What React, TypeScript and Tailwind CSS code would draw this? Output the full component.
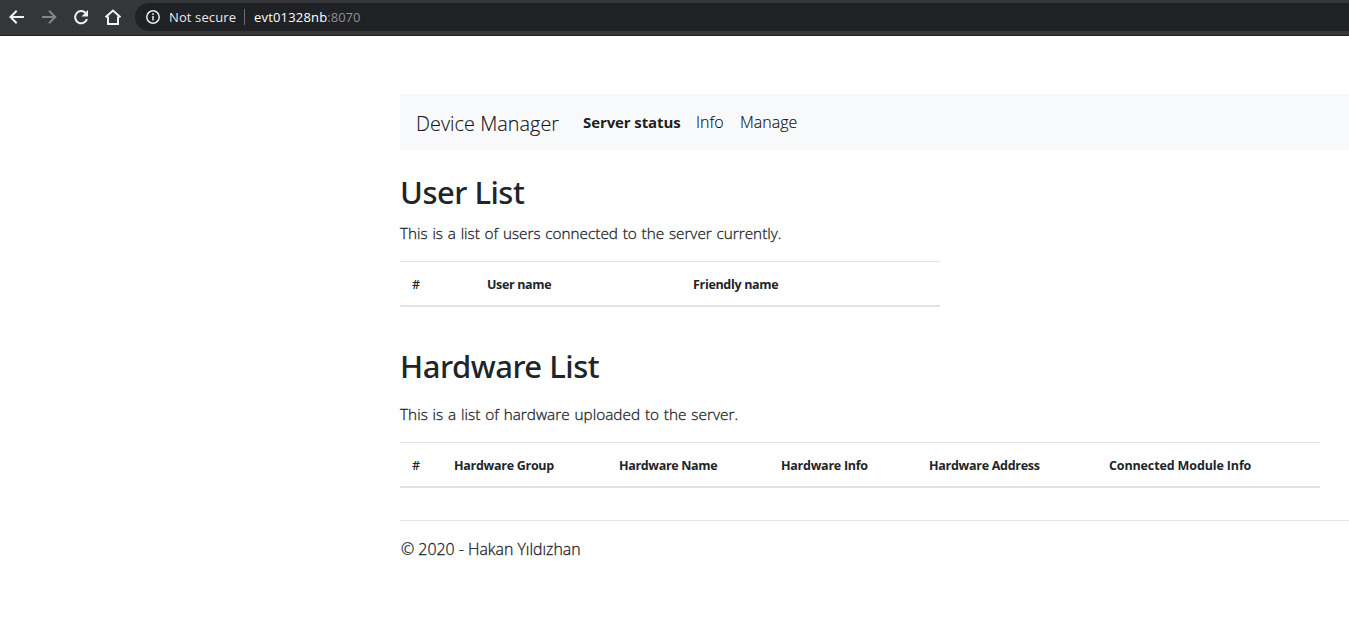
type Column = { label: string; className: string };

const userColumns: Column[] = [
  { label: '#', className: 'w-[75px] font-semibold' },
  { label: 'User name', className: 'w-[206px] font-bold tracking-[-0.36px]' },
  { label: 'Friendly name', className: 'w-[259px] font-bold tracking-[-0.32px]' },
];

const hardwareColumns: Column[] = [
  { label: '#', className: 'w-[42px] font-semibold' },
  { label: 'Hardware Group', className: 'w-[165px] font-bold tracking-[-0.28px]' },
  { label: 'Hardware Name', className: 'w-[162px] font-bold tracking-[-0.34px]' },
  { label: 'Hardware Info', className: 'w-[148px] font-bold tracking-[-0.26px]' },
  { label: 'Hardware Address', className: 'w-[180px] font-bold tracking-[-0.28px]' },
  { label: 'Connected Module Info', className: 'w-[223px] font-bold tracking-[-0.13px]' },
];

function HeaderTable({ columns }: { columns: Column[] }) {
  return (
    <table className="table-fixed border-separate border-spacing-0">
      <thead>
        <tr>
          {columns.map((c) => (
            <th
              key={c.label}
              className={`h-[46px] border-t border-b-2 border-[#dee2e6] pt-0.5 pr-0 pb-0 pl-3 text-left text-[12.5px] leading-5 ${c.className}`}
            >
              {c.label}
            </th>
          ))}
        </tr>
      </thead>
    </table>
  );
}

const heading = "font-['Noto_Sans',sans-serif] text-[31px] leading-[38px] font-medium tracking-[-0.5px]";
const paragraph = 'text-[15.3px] leading-6 font-light [word-spacing:0.8px] [-webkit-text-stroke:0.3px_#212529]';

function BrowserBar() {
  return (
    <header className="flex h-9 items-start border-b border-[#202124] bg-[#35363a] pt-[3px]">
      <div className="flex w-[135px] shrink-0 gap-2 pt-px pl-1">
        <svg width="24" height="26" viewBox="0 0 24 26" fill="none" stroke="#f1f3f4" strokeWidth="2">
          <path d="M20 13H7M12.700 6.800L6.500 13l6.200 6.200" />
        </svg>
        <svg width="24" height="26" viewBox="0 0 24 26" fill="none" stroke="#85868a" strokeWidth="2">
          <path d="M6 13h13M13 6.800l6.200 6.200-6.200 6.200" />
        </svg>
        <svg width="24" height="26" viewBox="0 0 24 26" fill="none" stroke="#f1f3f4" strokeWidth="2">
          <path d="M19 15.200A6.100 6.100 0 1 1 17.600 8.900" />
          <path d="M20 6v6.500h-6.500z" fill="#f1f3f4" stroke="none" />
        </svg>
        <svg width="24" height="26" viewBox="0 0 24 26" fill="none" stroke="#f1f3f4" strokeWidth="2">
          <path d="M8 12.500V20h10v-7.500M5.500 13.300L13 6.500l7.500 6.800" />
        </svg>
      </div>
      <div className="flex h-7 flex-1 items-center rounded-l-full bg-[#202124] pl-[11px] text-[13px] leading-5">
        <svg width="14" height="14" viewBox="0 0 14 14" fill="none" stroke="#e8eaed" strokeWidth="1.5">
          <circle cx="7" cy="7" r="6.2" />
          <path d="M7 6v4.500M7 3.300v1.600" />
        </svg>
        <span className="ml-[9px] w-[67px] tracking-[0.12px] whitespace-nowrap text-[#e8eaed]">Not secure</span>
        <div className="ml-2 h-4 w-px bg-[#6b6e72]" />
        <span className="ml-[9px] tracking-[0.18px] text-white">evt01328nb</span>
        <span className="text-[#8b8e92]">:8070</span>
      </div>
    </header>
  );
}

export default function App() {
  return (
    <div className="h-[644px] w-[1349px] overflow-hidden bg-white font-['Open_Sans',sans-serif] text-[#212529]">
      <BrowserBar />
      <main className="ml-[400px] pt-[58px]">
        <nav className="flex h-14 items-center bg-[#f8f9fa] pl-4 text-black/90">
          <span className="w-[143px] pt-1 text-[19.8px] font-light tracking-[0.05px] whitespace-nowrap [-webkit-text-stroke:0.2px]">Device Manager</span>
          <span className="ml-6 w-[97px] text-[15px] font-bold tracking-[-0.1px] whitespace-nowrap">Server status</span>
          <span className="ml-4 w-7 text-[16px] font-light [-webkit-text-stroke:0.2px]">Info</span>
          <span className="ml-4 text-[16px] font-light [-webkit-text-stroke:0.2px]">Manage</span>
        </nav>
        <h1 className={`mt-[23px] ${heading}`}>User List</h1>
        <p className={`mt-[10px] mb-4 ${paragraph}`}>This is a list of users connected to the server currently.</p>
        <HeaderTable columns={userColumns} />
        <h1 className={`mt-10 ${heading}`}>Hardware List</h1>
        <p className={`mt-[17px] mb-4 tracking-[0.04px] ${paragraph}`}>This is a list of hardware uploaded to the server.</p>
        <HeaderTable columns={hardwareColumns} />
        <footer className="mt-8 border-t border-[#e5e5e5] pt-4 pl-px text-[15.9px] leading-6 font-light [-webkit-text-stroke:0.3px_#212529]">
          © 2020 - Hakan Yıldızhan
        </footer>
      </main>
    </div>
  );
}
